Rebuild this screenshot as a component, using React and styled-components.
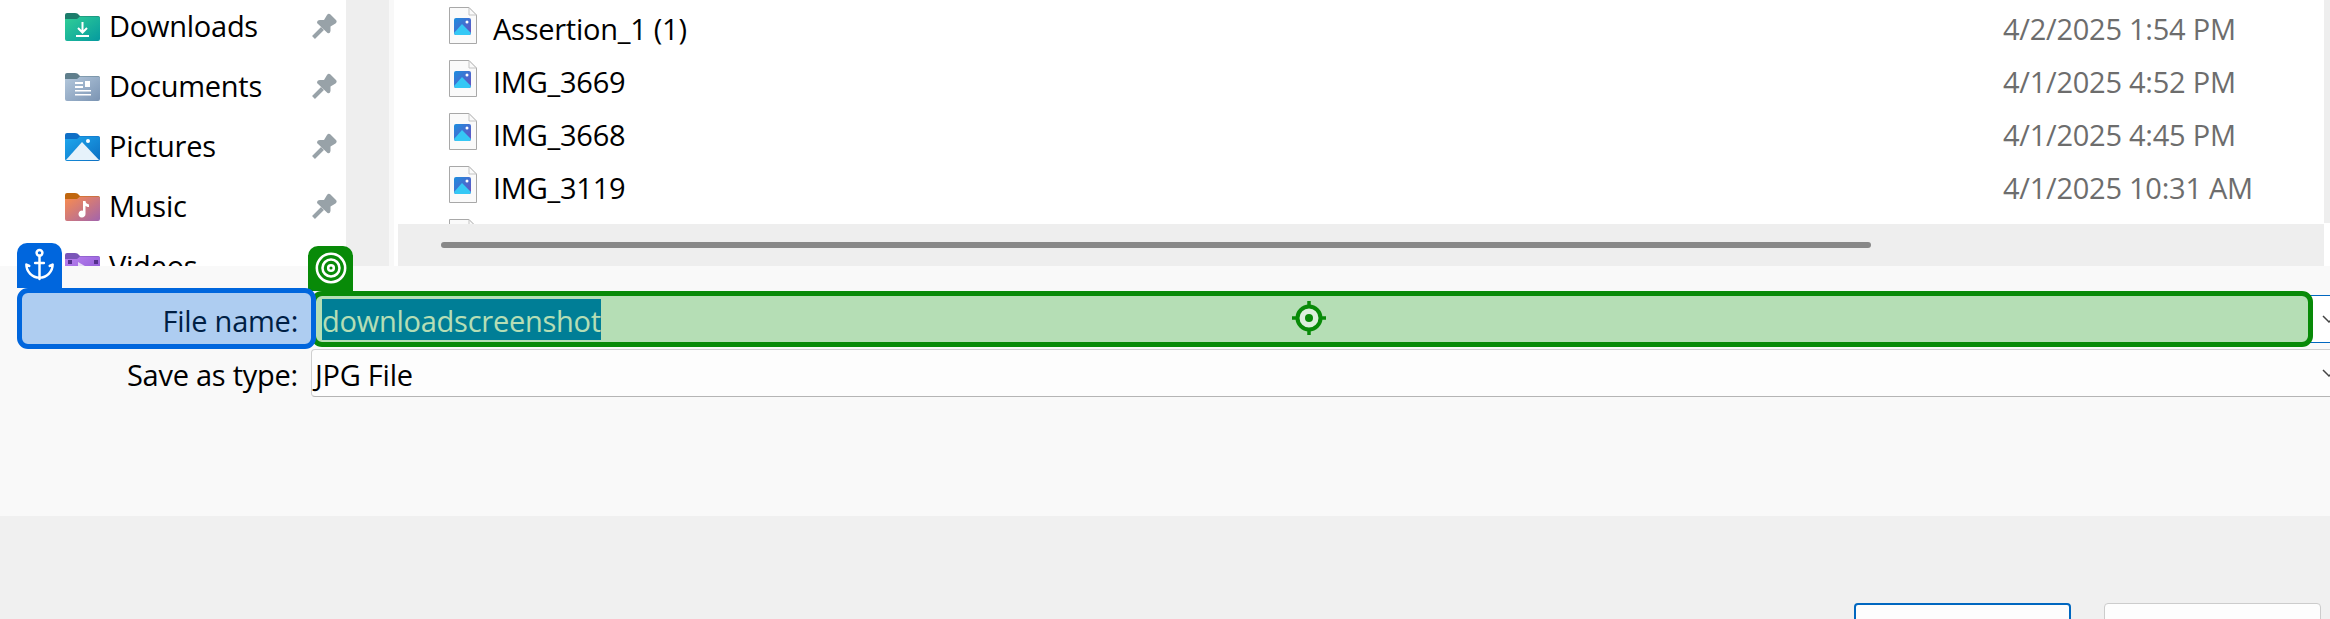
import React from 'react';
import styled, { createGlobalStyle } from 'styled-components';
import { Anchor, Target } from 'lucide-react';

const GlobalStyle = createGlobalStyle`
  html, body {
    margin: 0;
    padding: 0;
    background: #f0f0f0;
  }
  * {
    box-sizing: border-box;
  }
`;

const Page = styled.div`
  position: relative;
  width: 2330px;
  height: 619px;
  overflow: hidden;
  display: flex;
  flex-direction: column;
  font-family: "Open Sans", "Noto Sans", sans-serif;
  font-size: 29px;
  letter-spacing: -0.25px;
  color: #000;
`;

const Browser = styled.div`
  height: 266px;
  display: flex;
  background: #eeeeee;
`;

const NavPane = styled.div`
  width: 346px;
  height: 266px;
  overflow: hidden;
  background: #fff;
  display: flex;
  flex-direction: column;
  gap: 6px;
`;

const NavRow = styled.div`
  flex: none;
  height: 54px;
  display: flex;
  align-items: center;
  padding: 0 9px 0 65px;
  gap: 9px;
`;

const NavLabel = styled.span`
  flex: 1;
  line-height: 52px;
  padding-bottom: 2px;
`;

const Splitter = styled.div`
  flex: none;
  width: 48px;
  background: #eeeeee;
  border-right: 5px solid #f8f8f8;
`;

const FilePane = styled.div`
  width: 1930px;
  height: 266px;
  background: #fff;
  display: flex;
  flex-direction: column;
`;

const FileList = styled.div`
  height: 224px;
  overflow: hidden;
`;

const FileRow = styled.div`
  height: 53px;
  display: flex;
  padding: 7px 0 0 55px;
`;

const FileName = styled.span`
  width: 1510px;
  margin-left: 16px;
  line-height: 44px;
`;

const FileDate = styled.span`
  line-height: 44px;
  color: #6d6d6d;
`;

const ScrollTrack = styled.div`
  height: 42px;
  margin-left: 4px;
  padding: 18px 0 0 43px;
  background: #eeeeee;
`;

const ScrollThumb = styled.div`
  width: 1430px;
  height: 6px;
  border-radius: 3px;
  background: #888888;
`;

const EdgeStrip = styled.div`
  flex: 1;
  height: 266px;
  display: flex;
  flex-direction: column;
  background: #fff;
  &::before {
    content: "";
    height: 223px;
    background: #eeeeee;
  }
`;

const FormPanel = styled.div`
  height: 250px;
  flex: none;
  background: #f9f9f9;
  display: flex;
  flex-direction: column;
  gap: 6px;
  padding-top: 29px;
`;

const FormRow = styled.div`
  display: flex;
  align-items: center;
  height: 48px;
  gap: 13px;
`;

const FieldLabel = styled.label`
  width: 298px;
  flex: none;
  padding-top: 2px;
  text-align: right;
`;

const Field = styled.div`
  width: 2040px;
  flex: none;
  height: 48px;
  display: flex;
  align-items: center;
  justify-content: space-between;
  padding: 0 14px 0 ${p => (p.$focused ? '10px' : '3px')};
  background: ${p => (p.$focused ? '#ffffff' : '#fdfdfd')};
  border-radius: 4px;
  border: 1px solid ${p => (p.$focused ? '#0067c0' : '#cfcfcf')};
  border-bottom-color: ${p => (p.$focused ? '#0067c0' : '#b5b5b5')};
`;

const FieldText = styled.span`
  padding-top: 2px;
`;

const Selected = styled.span`
  height: 41px;
  line-height: 43px;
  background: #0078d4;
  color: #fff;
`;

const Chevron = styled.svg`
  flex: none;
  width: 14px;
  height: 9px;
`;

const Footer = styled.div`
  flex: 1;
  background: #f0f0f0;
  display: flex;
  justify-content: flex-end;
  gap: 33px;
  padding: 87px 9px 0 0;
`;

const DialogButton = styled.button`
  width: 217px;
  height: 60px;
  padding: 0;
  background: #fdfdfd;
  border-radius: 4px;
  border: ${p => (p.$primary ? '2px solid #0067c0' : '1px solid #cccccc')};
`;

/* highlight boxes drawn over the form */
const Highlight = styled.div`
  position: absolute;
  left: ${p => p.$left}px;
  top: ${p => p.$top}px;
  width: ${p => p.$width}px;
  height: ${p => p.$height}px;
  border: 5px solid ${p => p.$color};
  border-radius: 11px;
  background: ${p => p.$fill};
`;

const HighlightTab = styled.div`
  position: absolute;
  left: ${p => p.$shift}px;
  bottom: 100%;
  width: 45px;
  height: 45px;
  margin-bottom: 5px;
  padding-bottom: 2px;
  display: flex;
  align-items: center;
  justify-content: center;
  border-radius: 10px 10px 0 0;
  background: ${p => p.$color};
  color: #fff;
`;

const Crosshair = styled.svg`
  position: absolute;
  left: 975px;
  top: 4px;
  width: 36px;
  height: 36px;
`;

function Folder({ id, from, to, tab, children }) {
  return (
    <svg width="35" height="28" viewBox="0 0 35 28" style={{ flex: 'none' }}>
      <defs>
        <linearGradient id={id} x1="0" y1="0" x2="1" y2="1">
          <stop offset="0" stopColor={from} />
          <stop offset="1" stopColor={to} />
        </linearGradient>
      </defs>
      <path d="M0 2a2 2 0 0 1 2-2h8c2 0 3 .8 4 2l1 1H33a2 2 0 0 1 2 2v1H0z" fill={tab} />
      <path d="M0 6l12 0 3-2.500H33a2 2 0 0 1 2 2V26a2 2 0 0 1-2 2H2a2 2 0 0 1-2-2z" fill={`url(#${id})`} />
      {children}
    </svg>
  );
}

function Pin() {
  return (
    <svg width="25" height="26" viewBox="0 0 25 26" style={{ flex: 'none', marginTop: '-3px' }}>
      <path d="M5 10Q5 7 8 7L12 7 15 2Q16.500 0 18.500 1.500L24 7Q25.500 9 23.500 10.500L18.500 13.500 18.500 18Q18 21 15.500 20Z" fill="#98a2a8" />
      <path d="M10.500 15.500L1.500 24.500" stroke="#98a2a8" strokeWidth="4" fill="none" />
    </svg>
  );
}

function ImageFile({ id }) {
  return (
    <svg width="28" height="37" viewBox="0 0 28 37" style={{ flex: 'none' }}>
      <defs>
        <linearGradient id={id} x1="0" y1="0" x2="1" y2="1">
          <stop offset="0" stopColor="#1b8fe0" />
          <stop offset="1" stopColor="#6a4fc0" />
        </linearGradient>
      </defs>
      <path d="M.5.5H20L27.500 8V36.500H.5z" fill="#fafafa" stroke="#a8a8a8" />
      <path d="M20 .5V8H27.500" fill="none" stroke="#c4c4c4" />
      <rect x="5" y="11" width="17" height="17" rx="2" fill={`url(#${id})`} />
      <path d="M5 26L13 17 22 26V26a2 2 0 0 1-2 2H7a2 2 0 0 1-2-2z" fill="#35c8f5" />
      <circle cx="18" cy="15" r="1.500" fill="#fff" />
    </svg>
  );
}

const navItems = [
  {
    label: 'Downloads', from: '#31cf96', to: '#059a9f', tab: '#1c7c6b',
    glyph: <path d="M17.500 9v10M13 15l4.500 4.500L22 15M11 23h13" stroke="#fff" strokeWidth="2" fill="none" />,
  },
  {
    label: 'Documents', from: '#b4c8dc', to: '#7b94b3', tab: '#5f7e8c',
    glyph: <g fill="#fff"><rect x="10" y="9" width="8" height="2" /><rect x="10" y="13" width="8" height="2" /><rect x="20" y="8" width="5" height="6" /><rect x="10" y="17" width="16" height="1.500" /><rect x="10" y="21" width="16" height="1.500" /></g>,
  },
  {
    label: 'Pictures', from: '#1fa8ee', to: '#0c6fc2', tab: '#0f6fc6',
    glyph: <g><path d="M1 27L17 9 34 27z" fill="#e6f2fb" /><circle cx="23" cy="8" r="2" fill="#fff" /></g>,
  },
  {
    label: 'Music', from: '#fb8d4c', to: '#a264ad', tab: '#c0670f',
    glyph: <path d="M18 8h2.500c0 2.500 2 3 3.500 3.500V14c-1.500 0-2.700-.5-3.500-1V21a3.500 3.500 0 1 1-2.500-3.300z" fill="#fff" />,
  },
  {
    label: 'Videos', from: '#bb82f0', to: '#8753d2', tab: '#7a55b8',
    glyph: <g><path d="M13 9L25 16 13 24z" fill="#e8dcf8" /><g fill="#54308c"><rect x="3" y="7" width="4" height="4" /><rect x="29" y="7" width="4" height="4" /><rect x="3" y="14" width="4" height="4" /><rect x="29" y="14" width="4" height="4" /></g></g>,
  },
];

const files = [
  { name: 'Assertion_1 (1)', date: '4/2/2025 1:54 PM' },
  { name: 'IMG_3669', date: '4/1/2025 4:52 PM' },
  { name: 'IMG_3668', date: '4/1/2025 4:45 PM' },
  { name: 'IMG_3119', date: '4/1/2025 10:31 AM' },
  { name: '', date: '' },
];

function ChevronDown() {
  return (
    <Chevron viewBox="0 0 14 9">
      <path d="M1 1l6 6 6-6" fill="none" stroke="#444" strokeWidth="1.500" />
    </Chevron>
  );
}

export default function App() {
  return (
    <Page>
      <GlobalStyle />
      <Browser>
        <NavPane>
          {navItems.map(item => (
            <NavRow key={item.label}>
              <Folder id={`folder-${item.label}`} from={item.from} to={item.to} tab={item.tab}>
                {item.glyph}
              </Folder>
              <NavLabel>{item.label}</NavLabel>
              {item.label !== 'Videos' && <Pin />}
            </NavRow>
          ))}
        </NavPane>
        <Splitter />
        <FilePane>
          <FileList>
            {files.map((file, i) => (
              <FileRow key={i}>
                <ImageFile id={`file-${i}`} />
                <FileName>{file.name}</FileName>
                <FileDate>{file.date}</FileDate>
              </FileRow>
            ))}
          </FileList>
          <ScrollTrack>
            <ScrollThumb />
          </ScrollTrack>
        </FilePane>
        <EdgeStrip />
      </Browser>
      <FormPanel>
        <FormRow>
          <FieldLabel>File name:</FieldLabel>
          <Field $focused>
            <Selected>downloadscreenshot</Selected>
            <ChevronDown />
          </Field>
        </FormRow>
        <FormRow>
          <FieldLabel>Save as type:</FieldLabel>
          <Field>
            <FieldText>JPG File</FieldText>
            <ChevronDown />
          </Field>
        </FormRow>
      </FormPanel>
      <Footer>
        <DialogButton $primary aria-label="Save" />
        <DialogButton aria-label="Cancel" />
      </Footer>

      <Highlight $left={311} $top={291} $width={2002} $height={56} $color="#088a08" $fill="rgba(0,141,0,.29)">
        <HighlightTab $shift={-8} $color="#088a08">
          <Target size={34} strokeWidth={1.8} />
        </HighlightTab>
        <Crosshair viewBox="0 0 36 36">
          <circle cx="18" cy="18" r="11.500" fill="#dcefdc" stroke="#088a08" strokeWidth="4" />
          <circle cx="18" cy="18" r="4" fill="#088a08" />
          <path d="M18 1v6M18 29v6M1 18h6M29 18h6" stroke="#088a08" strokeWidth="3.500" />
        </Crosshair>
      </Highlight>
      <Highlight $left={17} $top={288} $width={299} $height={61} $color="#0066dd" $fill="rgba(0,102,221,.3)">
        <HighlightTab $shift={-5} $color="#0066dd">
          <Anchor size={35} strokeWidth={1.7} />
        </HighlightTab>
      </Highlight>
    </Page>
  );
}
